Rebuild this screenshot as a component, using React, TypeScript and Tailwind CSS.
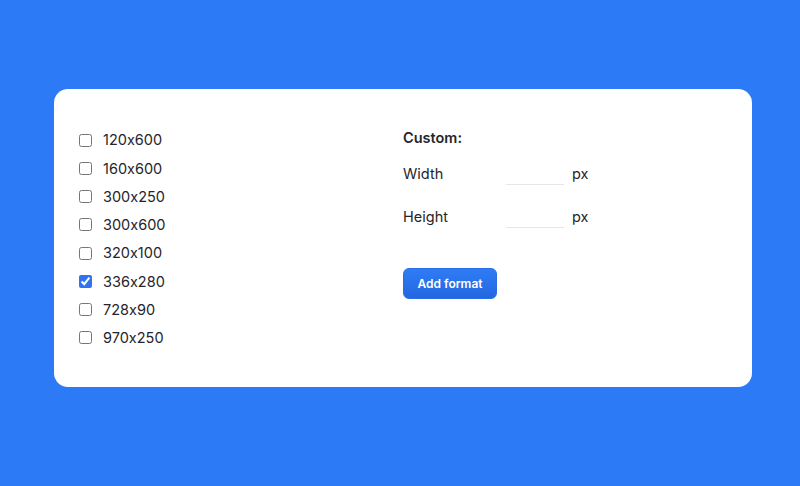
import React from "react";

const formats = ["120x600", "160x600", "300x250", "300x600", "320x100", "336x280", "728x90", "970x250"];

export default function App() {
  return (
    <div className="w-[800px] h-[486px] bg-[#2d7af6] pt-[89px] pl-[54px] font-['Inter',sans-serif] [font-feature-settings:'calt'_0] text-[#25252b]">
      <div className="w-[698px] h-[298px] bg-white rounded-[14px] px-[26px] py-[37px] grid grid-cols-2">
        <div className="flex flex-col">
          {formats.map((f) => (
            <label key={f} className="h-[28.25px] flex items-center gap-[11px] text-[14.5px]">
              <input
                type="checkbox"
                defaultChecked={f === "336x280"}
                className="w-[13px] h-[13px] m-0 -ml-[1px] accent-[#2f73f0]"
              />
              <span>{f}</span>
            </label>
          ))}
        </div>
        <div className="flex flex-col pt-[2px]">
          <div className="text-[14.5px] font-semibold mt-[-3px] h-[26px] flex items-center">Custom:</div>
          <div className="flex items-end mt-[10px] h-[26px] text-[14.5px]">
            <span className="w-[103px] pb-[2px]">Width</span>
            <input className="w-[58px] h-[21px] mb-[2px] border-b border-[#e6e6ea] outline-none" />
            <span className="ml-[8px] pb-[2px]">px</span>
          </div>
          <div className="flex items-end mt-[17px] h-[26px] text-[14.5px]">
            <span className="w-[103px] pb-[2px]">Height</span>
            <input className="w-[58px] h-[21px] mb-[2px] border-b border-[#e6e6ea] outline-none" />
            <span className="ml-[8px] pb-[2px]">px</span>
          </div>
          <div className="mt-[38px]">
            <button className="w-[94px] h-[31px] rounded-[6px] bg-gradient-to-b from-[#2f7cf5] to-[#2467e0] border border-[#2a6de6] text-white text-[12px] font-semibold">
              Add format
            </button>
          </div>
        </div>
      </div>
    </div>
  );
}
